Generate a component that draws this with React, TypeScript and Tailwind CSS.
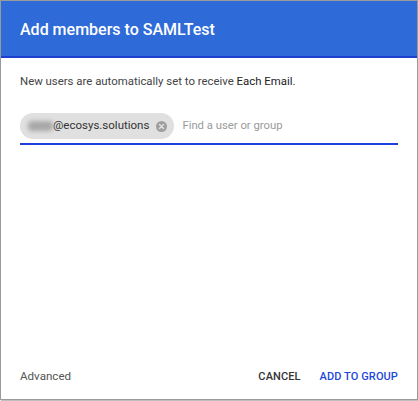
import { FC } from 'react'

const App: FC = () => {
  return (
    <div className="w-[418px] h-[401px] bg-white font-['Roboto',sans-serif]">
      <div className="w-[418px] h-[400px] border border-[#9a9a9a] shadow-[1px_1px_1px_rgba(0,0,0,0.25)] flex flex-col">
        {/* Header */}
        <div className="h-[57px] bg-[#2e6bd9] border-b-2 border-[#1c3fcf] flex items-center px-[19px] pt-[2px] shrink-0">
          <h1 className="text-[16px] font-medium text-white">Add members to SAMLTest</h1>
        </div>

        {/* Body */}
        <div className="flex-1 px-[19px]">
          <p className="mt-[15px] text-[11.4px] text-[#444]">
            New users are automatically set to receive <span className="text-[#222]">Each Email</span>.
          </p>

          <div className="mt-[23px] flex items-center gap-[8px] border-b-2 border-[#1d3fdc] pb-[4px]">
            <div className="h-[26px] flex items-center bg-[#e0e0e0] rounded-full pl-[8px] pr-[7px]">
              <span className="w-[25px] h-[10px] rounded-sm bg-[#a8a8a8] blur-[2px]" />
              <span className="text-[11.5px] text-[#333]">@ecosys.solutions</span>
              <svg className="ml-[7px]" width="11" height="11" viewBox="0 0 12 12">
                <circle cx="6" cy="6" r="6" fill="#9e9e9e" />
                <path d="M3.8 3.8 L8.2 8.2 M8.2 3.8 L3.8 8.2" stroke="#e0e0e0" strokeWidth="1.6" strokeLinecap="round" />
              </svg>
            </div>
            <span className="text-[11.3px] text-[#9a9a9a]">Find a user or group</span>
          </div>
        </div>

        {/* Footer */}
        <div className="h-[44px] px-[19px] flex items-center justify-between shrink-0">
          <span className="text-[11.6px] text-[#555]">Advanced</span>
          <div className="flex items-center gap-[19px]">
            <span className="text-[11px] font-medium text-[#333] tracking-[0.1px]">CANCEL</span>
            <span className="text-[11px] font-medium text-[#1c47d8] tracking-[0.1px]">ADD TO GROUP</span>
          </div>
        </div>
      </div>
    </div>
  )
}

export default App
